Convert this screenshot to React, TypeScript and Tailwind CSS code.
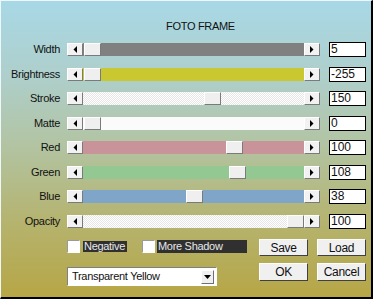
import React from "react";

type Row = { label: string; value: string; track: string; thumb: number };

const rows: Row[] = [
  { label: "Width", value: "5", track: "bg-[#808080]", thumb: 1 },
  { label: "Brightness", value: "-255", track: "bg-[#c9c830]", thumb: 1 },
  { label: "Stroke", value: "150", track: "dither", thumb: 121 },
  { label: "Matte", value: "0", track: "bg-[#fbfbfb]", thumb: 1 },
  { label: "Red", value: "100", track: "bg-[#c9939a]", thumb: 143 },
  { label: "Green", value: "108", track: "bg-[#93c893]", thumb: 146 },
  { label: "Blue", value: "38", track: "bg-[#7fa6c9]", thumb: 103 },
  { label: "Opacity", value: "100", track: "dither", thumb: 204 },
];

function ArrowBtn({ dir }: { dir: "left" | "right" }) {
  return (
    <div className="w-[16px] h-[13px] shrink-0 bg-[#f2f2f2] border-t border-l border-t-white border-l-white border-r border-b border-r-[#7a7a7a] border-b-[#7a7a7a] flex items-center justify-center">
      <svg width="4" height="7" viewBox="0 0 4 7">
        {dir === "left" ? (
          <polygon points="4,0 4,7 0.5,3.5" fill="#000" />
        ) : (
          <polygon points="0,0 0,7 3.5,3.5" fill="#000" />
        )}
      </svg>
    </div>
  );
}

function Slider({ track, thumb }: { track: string; thumb: number }) {
  const trackCls =
    track === "dither"
      ? "bg-[image:repeating-conic-gradient(#ffffff_0_25%,#e6e6e6_0_50%)] bg-[length:2px_2px]"
      : track;
  return (
    <div className="ml-[7px] w-[253px] h-[13px] flex">
      <ArrowBtn dir="left" />
      <div className={`relative flex-1 h-full ${trackCls}`}>
        <div
          className="absolute top-0 w-[17px] h-[13px] bg-[#efefef] border-t border-l border-t-white border-l-white border-r border-b border-r-[#7a7a7a] border-b-[#7a7a7a]"
          style={{ left: thumb }}
        />
      </div>
      <ArrowBtn dir="right" />
    </div>
  );
}

function Button({ children, h }: { children: React.ReactNode; h: string }) {
  return (
    <div
      className={`w-[49px] ${h} bg-[#f0f0f0] border-t border-l border-t-white border-l-white border-r border-b border-r-[#404040] border-b-[#404040] flex items-center justify-center text-[12px] leading-none text-[#111]`}
    >
      {children}
    </div>
  );
}

function Checkbox() {
  return (
    <div className="w-[13px] h-[13px] shrink-0 bg-white border-t border-l border-t-[#9a9a9a] border-l-[#9a9a9a] border-r border-b border-r-white border-b-white" />
  );
}

export default function App() {
  return (
    <div
      className="w-[373px] h-[299px] overflow-hidden border-t border-l border-t-[#eef7fa] border-l-[#eef7fa] border-r-2 border-b-2 border-r-black border-b-black bg-[linear-gradient(180deg,#a8d8e6_0%,#aecfcc_25%,#b2c3a0_50%,#b5b36e_75%,#b6a646_100%)] text-[11px] tracking-[-0.3px] text-[#111]"
      style={{ fontFamily: '"Liberation Sans", Arial, sans-serif' }}
    >
      <div className="mt-[19px] pl-[165px] h-[13px] leading-[13px] text-[11px]">FOTO FRAME</div>

      <div className="mt-[9px] flex flex-col gap-[9.5px]">
        {rows.map((r) => (
          <div key={r.label} className="flex items-center h-[15px]">
            <div className="w-[59px] text-right leading-[13px]">{r.label}</div>
            <Slider track={r.track} thumb={r.thumb} />
            <div className="ml-[9px] w-[37px] h-[15px] bg-white border border-black pl-[1px] text-[12px] leading-[13px] tracking-normal">
              {r.value}
            </div>
          </div>
        ))}
      </div>

      <div className="mt-[10.5px] flex">
        <div className="ml-[66px] w-[180px] flex flex-col">
          <div className="mt-[1px] flex items-center h-[13px]">
            <Checkbox />
            <div className="ml-[3px] w-[44px] h-[11px] bg-[#303030] text-[#e8e8e8] leading-[11px] pl-[1px]">
              Negative
            </div>
            <div className="ml-[15px]">
              <Checkbox />
            </div>
            <div className="ml-[2px] w-[90px] h-[13px] bg-[#303030] text-[#e8e8e8] leading-[13px] pl-[1px]">
              More Shadow
            </div>
          </div>
          <div className="mt-[14px] w-[150px] h-[19px] bg-white border-t border-l border-t-[#808080] border-l-[#808080] border-r border-b border-r-white border-b-white flex items-center">
            <div className="flex-1 pl-[4px] text-[11px] leading-[13px]">Transparent Yellow</div>
            <div className="mr-[2px] w-[13px] h-[14px] bg-[#f0f0f0] border-t border-l border-t-white border-l-white border-r border-b border-r-[#707070] border-b-[#707070] flex items-center justify-center">
              <svg width="7" height="4" viewBox="0 0 7 4">
                <polygon points="0,0 7,0 3.5,4" fill="#000" />
              </svg>
            </div>
          </div>
        </div>

        <div className="ml-[12px] flex flex-col">
          <div className="flex gap-[9px]">
            <Button h="h-[17px]">Save</Button>
            <Button h="h-[17px]">Load</Button>
          </div>
          <div className="mt-[7px] flex gap-[9px]">
            <Button h="h-[18px]">OK</Button>
            <Button h="h-[18px]">Cancel</Button>
          </div>
        </div>
      </div>
    </div>
  );
}
